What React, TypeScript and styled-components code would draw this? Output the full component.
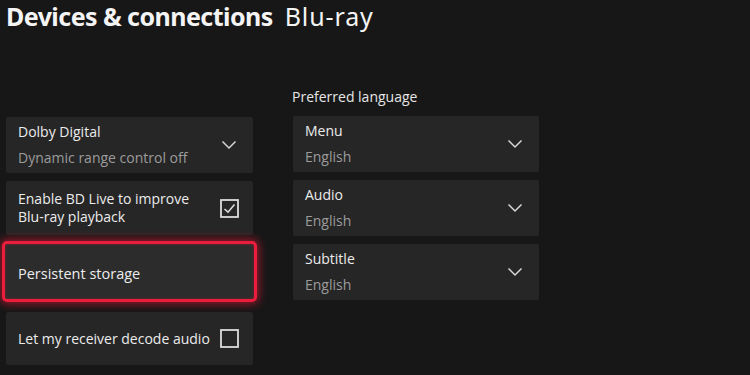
import React from "react";
import styled, { createGlobalStyle } from "styled-components";

const Global = createGlobalStyle`
  html, body { margin: 0; padding: 0; background: #171717; }
  body { font-family: "Open Sans", "Noto Sans", sans-serif; color: #ececec; }
`;

const Page = styled.div`
  width: 750px;
  height: 375px;
  box-sizing: border-box;
  padding: 0 0 0 6px;
  background: #171717;
  overflow: hidden;
`;

const Header = styled.h1`
  margin: 0;
  height: 40px;
  display: flex;
  align-items: baseline;
  gap: 12px;
  font-family: "Noto Sans", sans-serif;
  font-size: 25px;
  line-height: 32px;
  color: #f4f4f4;
  white-space: nowrap;
`;

const Strong = styled.span`
  font-weight: 700;
  letter-spacing: -0.55px;
`;

const Light = styled.span`
  font-weight: 400;
  letter-spacing: 0.9px;
`;

const Columns = styled.div`
  display: grid;
  grid-template-columns: 247px 246px;
  grid-template-rows: 36px auto;
  column-gap: 40px;
  margin-top: 40px;
`;

const Label = styled.div`
  grid-column: 2;
  grid-row: 1;
  font-size: 14px;
  line-height: 20px;
  color: #e6e6e6;
  margin-left: -1px;
  padding-top: 7px;
`;

const Stack = styled.div<{ $col: number; $top: number }>`
  grid-column: ${(p) => p.$col};
  grid-row: 2;
  display: flex;
  flex-direction: column;
  gap: 8px;
  margin-top: ${(p) => p.$top}px;
`;

const Card = styled.div<{ $h?: number; $focused?: boolean }>`
  box-sizing: border-box;
  height: ${(p) => (p.$focused ? 61 : p.$h ?? 56)}px;
  display: flex;
  align-items: center;
  justify-content: space-between;
  padding: 0 12px;
  background: ${(p) => (p.$focused ? "#2c2c2c" : "#262626")};
  border-radius: 2px;
  ${(p) =>
    p.$focused
      ? `
    margin: -2px -4px 2px -4px;
    padding: 4px 14px 0 13px;
    border: 3px solid #ea1d3d;
    border-radius: 5px;
    box-shadow: 0 0 8px 2px rgba(235, 25, 55, 0.6), inset 0 0 3px rgba(240,30,60,0.4);
  `
      : ""}
`;

const TextBlock = styled.div`
  display: flex;
  flex-direction: column;
  min-width: 0;
`;

const Title = styled.div<{ $lh?: number; $size?: number }>`
  font-size: ${(p) => p.$size ?? 14}px;
  line-height: ${(p) => p.$lh ?? 26}px;
  color: #ececec;
  white-space: nowrap;
`;

const Sub = styled.div`
  font-size: 14px;
  line-height: 26px;
  color: #9c9c9c;
  white-space: nowrap;
`;

const IconBox = styled.div`
  width: 20px;
  height: 20px;
  display: flex;
  align-items: center;
  justify-content: center;
  flex: none;
  margin-right: 2px;
`;

const Chevron = () => (
  <svg width="16" height="10" viewBox="0 0 16 10">
    <path d="M1.5 1.5 L8 8 L14.5 1.5" fill="none" stroke="#d6d6d6" strokeWidth="1.5" />
  </svg>
);

const Check = ({ checked }: { checked?: boolean }) => (
  <svg width="19" height="19" viewBox="0 0 19 19">
    <rect x="1" y="1" width="17" height="17" fill="none" stroke="#dcdcdc" strokeWidth="1.8" />
    {checked && (
      <path d="M4.5 10 L8 13.2 L14.5 5.5" fill="none" stroke="#dcdcdc" strokeWidth="1.6" />
    )}
  </svg>
);

const Select = ({ title, value }: { title: string; value: string }) => (
  <Card>
    <TextBlock>
      <Title>{title}</Title>
      <Sub>{value}</Sub>
    </TextBlock>
    <IconBox>
      <Chevron />
    </IconBox>
  </Card>
);

export default function App() {
  return (
    <Page>
      <Global />
      <Header>
        <Strong>Devices &amp; connections</Strong>
        <Light>Blu-ray</Light>
      </Header>
      <Columns>
        <Label>Preferred language</Label>
        <Stack $col={1} $top={1}>
          <Select title="Dolby Digital" value="Dynamic range control off" />
          <Card $h={54}>
            <TextBlock>
              <Title $lh={18}>Enable BD Live to improve</Title>
              <Title $lh={18}>Blu-ray playback</Title>
            </TextBlock>
            <IconBox>
              <Check checked />
            </IconBox>
          </Card>
          <Card $focused>
            <Title $size={14.5}>Persistent storage</Title>
          </Card>
          <Card $h={53}>
            <Title>Let my receiver decode audio</Title>
            <IconBox>
              <Check />
            </IconBox>
          </Card>
        </Stack>
        <Stack $col={2} $top={0}>
          <Select title="Menu" value="English" />
          <Select title="Audio" value="English" />
          <Select title="Subtitle" value="English" />
        </Stack>
      </Columns>
    </Page>
  );
}
